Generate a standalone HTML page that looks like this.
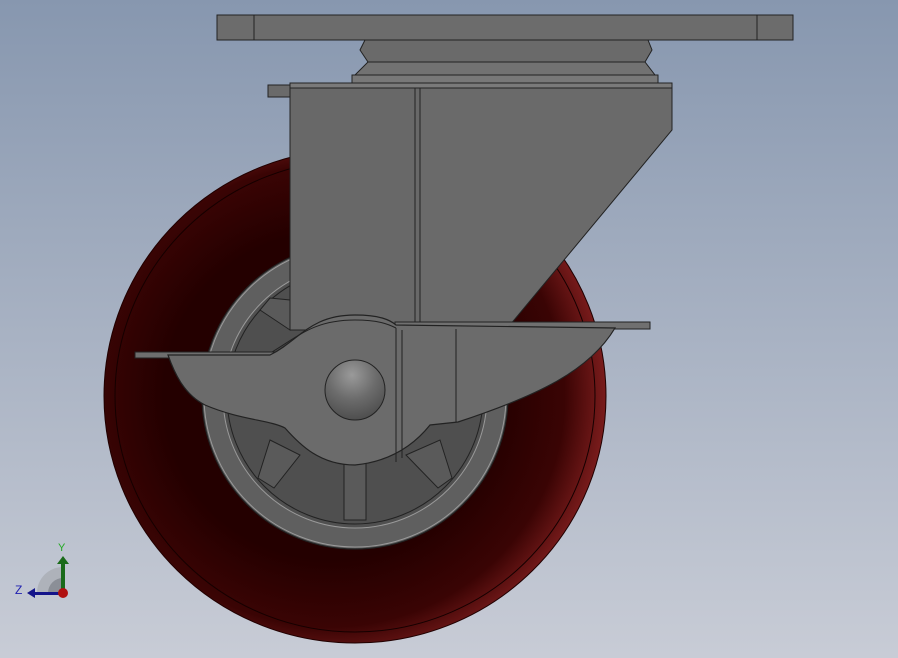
<!DOCTYPE html>
<html><head><style>
html,body{margin:0;padding:0;width:898px;height:658px;overflow:hidden}
</style></head><body>
<svg width="898" height="658" viewBox="0 0 898 658" xmlns="http://www.w3.org/2000/svg">
<defs>
<linearGradient id="bg" x1="0" y1="0" x2="0" y2="1">
<stop offset="0" stop-color="#8797af"/><stop offset="1" stop-color="#c8ccd6"/>
</linearGradient>
<radialGradient id="tire" cx="0.45" cy="0.5" r="0.55">
<stop offset="0.6" stop-color="#240000"/><stop offset="0.85" stop-color="#3a0404"/><stop offset="1" stop-color="#7a1c1c"/>
</radialGradient>
<radialGradient id="ball" cx="0.45" cy="0.25" r="0.8">
<stop offset="0" stop-color="#9a9a9a"/><stop offset="0.5" stop-color="#6c6c6c"/><stop offset="1" stop-color="#4a4a4a"/>
</radialGradient>
</defs>
<rect width="898" height="658" fill="url(#bg)"/>
<!-- wheel -->
<ellipse cx="355" cy="396" rx="251" ry="247" fill="url(#tire)" stroke="#200000"/>
<ellipse cx="355" cy="396" rx="240" ry="236" fill="none" stroke="#150000" stroke-width="1"/>
<circle cx="355" cy="396" r="153" fill="#5f5f5f" stroke="#222" stroke-width="1.2"/>
<circle cx="355" cy="396" r="151" fill="none" stroke="#999" stroke-width="1"/>
<circle cx="355" cy="396" r="132" fill="#505050" stroke="#999" stroke-width="1"/>
<circle cx="355" cy="396" r="128" fill="#4f4f4f" stroke="#222" stroke-width="1"/>
<g stroke="#222" stroke-width="1" fill="#5a5a5a">
<rect x="344" y="460" width="22" height="60"/>
<path d="M270 440 L300 455 L274 488 L258 478 Z"/>
<path d="M406 455 L440 440 L452 478 L438 488 Z"/>
<path d="M260 310 L290 330 L290 300 L270 298 Z"/>
</g>
<!-- top plate -->
<rect x="217" y="15" width="576" height="25" fill="#6c6c6c" stroke="#222"/>
<line x1="254" y1="15" x2="254" y2="40" stroke="#222"/>
<line x1="757" y1="15" x2="757" y2="40" stroke="#222"/>
<!-- swivel -->
<path d="M365 40 L648 40 L652 50 L645 62 L368 62 L360 50 Z" fill="#6a6a6a" stroke="#222"/>
<path d="M368 62 L645 62 L655 75 L355 75 Z" fill="#727272" stroke="#222"/>
<rect x="352" y="75" width="306" height="8" fill="#787878" stroke="#222"/>
<rect x="290" y="83" width="382" height="5" fill="#7a7a7a" stroke="#222"/>
<!-- bracket -->
<rect x="268" y="85" width="22" height="12" fill="#6a6a6a" stroke="#222"/>
<path d="M290 88 L420 88 L420 330 L290 330 Z" fill="#686868" stroke="#222"/>
<path d="M420 88 L672 88 L672 130 L510 325 L420 325 Z" fill="#6a6a6a" stroke="#222"/>
<line x1="415" y1="88" x2="415" y2="325" stroke="#222"/>
<!-- brake bars -->
<rect x="135" y="352" width="170" height="6" fill="#6e6e6e" stroke="#222"/>
<rect x="395" y="322" width="255" height="7" fill="#707070" stroke="#222"/>
<!-- brake body -->
<path d="M168 355 L270 355 C300 340 310 315 355 315 C380 315 390 320 396 325 L615 328 C590 370 540 395 458 422 L430 425 C410 450 385 462 355 465 C320 465 300 445 285 428 C270 420 240 420 205 405 C185 395 175 375 168 355 Z" fill="#6b6b6b" stroke="#222" stroke-width="1.2"/>
<path d="M272 352 C300 335 315 320 355 320 C378 320 388 324 396 328" fill="none" stroke="#222"/>
<line x1="396" y1="328" x2="396" y2="462" stroke="#222"/>
<line x1="402" y1="330" x2="402" y2="458" stroke="#222"/>
<line x1="456" y1="329" x2="456" y2="422" stroke="#222"/>
<!-- ball -->
<circle cx="355" cy="390" r="30" fill="url(#ball)" stroke="#222"/>
<!-- triad -->
<path d="M37 593 A26 26 0 0 1 63 567 L63 593 Z" fill="#aeb2ba"/>
<path d="M48 593 A15 15 0 0 1 63 578 L63 593 Z" fill="#8b8f97"/>
<rect x="61" y="562" width="4" height="30" fill="#1a6a1a"/>
<path d="M57 564 L63 556 L69 564 Z" fill="#1a6a1a"/>
<rect x="34" y="592" width="28" height="3" fill="#14148a"/>
<path d="M27 593 L35 588 L35 598 Z" fill="#14148a"/>
<circle cx="63" cy="593" r="5" fill="#b01010"/>
<text x="58" y="551" font-family="Liberation Sans, sans-serif" font-size="11" fill="#22aa22">Y</text>
<text x="15" y="594" font-family="Liberation Sans, sans-serif" font-size="12" fill="#2020b0">Z</text>
</svg>
</body></html>
